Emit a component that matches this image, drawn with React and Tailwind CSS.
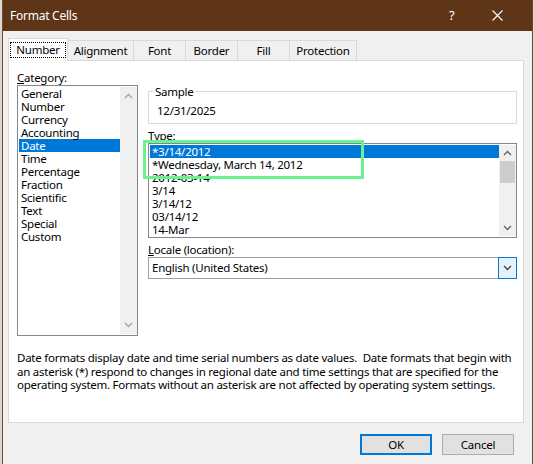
const categories = [
  'General', 'Number', 'Currency', 'Accounting', 'Date', 'Time',
  'Percentage', 'Fraction', 'Scientific', 'Text', 'Special', 'Custom',
];

const types = [
  '*3/14/2012', '*Wednesday, March 14, 2012', '2012-03-14', '3/14', '3/14/12', '03/14/12', '14-Mar',
];

const tabs = [
  { label: 'Alignment', w: 'w-[67px]' },
  { label: 'Font', w: 'w-[53px]' },
  { label: 'Border', w: 'w-[53px]' },
  { label: 'Fill', w: 'w-[53px]' },
  { label: 'Protection', w: 'w-[68px]' },
];

function Chevron({ up, color = '#a3a3a3' }) {
  return (
    <svg width="9" height="6" viewBox="0 0 9 6">
      <path
        d={up ? 'M1 5 L4.5 1.5 L8 5' : 'M1 1 L4.5 4.5 L8 1'}
        fill="none"
        stroke={color}
        strokeWidth="1.3"
      />
    </svg>
  );
}

export default function App() {
  return (
    <div className="flex h-[464px] w-[534px] overflow-hidden bg-[#ddd8d2] font-['Noto_Sans',sans-serif] text-[11.5px] tracking-[-0.25px] text-black">
      <div className="ml-[2px] flex h-[464px] w-[531px] flex-col border-x border-[#6b4c33] bg-[#f0f0f0]">
        {/* title bar */}
        <div className="flex h-[31px] shrink-0 items-center bg-[#5f3518] pl-[7px] text-white">
          <span className="flex-1 text-[12px]">Format Cells</span>
          <span className="w-[12px] text-[13px]">?</span>
          <div className="ml-[31px] mr-[29px] flex items-center">
            <svg width="11" height="11" viewBox="0 0 11 11">
              <path d="M0.5 0.5 L10.5 10.5 M10.5 0.5 L0.5 10.5" stroke="#fff" strokeWidth="1.1" />
            </svg>
          </div>
        </div>

        {/* tabs */}
        <div className="ml-[5px] mt-[7px] flex items-end">
          <div className="relative z-10 -mb-px flex h-[23px] w-[60px] items-center justify-center border border-b-0 border-[#d9d9d9] bg-white">
            <span className="border border-dotted border-black px-[5px] leading-[14px]">Number</span>
          </div>
          {tabs.map((t) => (
            <div
              key={t.label}
              className={`-ml-px flex h-[20px] items-center justify-center border border-b-0 border-[#d9d9d9] bg-[#f0f0f0] pt-px ${t.w}`}
            >
              {t.label}
            </div>
          ))}
        </div>

        {/* panel */}
        <div className="ml-[5px] h-[363px] w-[516px] border border-[#d9d9d9] bg-white pl-[8px] pr-[5px] pt-[9px]">
          <div className="flex gap-[10px]">
            <div className="w-[121px]">
              <div className="h-[15px] leading-[15px]">
                <span className="underline">C</span>ategory:
              </div>
              <div className="flex h-[251px] border border-[#828790] p-px pr-0">
                <div className="flex-1">
                  {categories.map((c) => (
                    <div
                      key={c}
                      className={`h-[13px] pl-[2px] leading-[13px] ${c === 'Date' ? 'bg-[#0078d7] text-white' : ''}`}
                    >
                      {c}
                    </div>
                  ))}
                </div>
                <div className="flex w-[17px] flex-col items-center justify-between bg-[#f0f0f0] py-[6px]">
                  <Chevron up />
                  <Chevron />
                </div>
              </div>
            </div>

            <div className="relative w-[369px] pt-[14px]">
              <fieldset className="border border-[#dcdcdc]">
                <legend className="ml-[5px] px-px leading-[15px]">Sample</legend>
                <div className="pb-[5px] pl-[8px] pt-[5px] leading-[14px]">12/31/2025</div>
              </fieldset>

              <div className="mt-[4px] h-[15px] leading-[15px]">Type:</div>
              <div className="flex h-[95px] border border-[#828790] p-px pr-0">
                <div className="flex-1">
                  {types.map((t, i) => (
                    <div
                      key={t}
                      className={`h-[13px] pl-[2px] leading-[13px] ${i === 0 ? 'bg-[#0078d7] text-white' : ''}`}
                    >
                      {t}
                    </div>
                  ))}
                </div>
                <div className="flex w-[17px] flex-col items-center bg-[#f0f0f0] py-[5px]">
                  <Chevron up color="#606060" />
                  <div className="mt-[5px] h-[22px] w-[15px] bg-[#cdcdcd]" />
                  <div className="mt-auto">
                    <Chevron color="#606060" />
                  </div>
                </div>
              </div>

              <div className="mt-[4px] h-[15px] leading-[15px]">
                <span className="underline">L</span>ocale (location):
              </div>
              <div className="flex h-[22px] border border-[#a0a0a0]">
                <div className="flex-1 pl-[3px] leading-[20px]">English (United States)</div>
                <div className="-my-px -mr-px flex w-[19px] items-center justify-center border border-[#0078d7] bg-[#e5f1fb]">
                  <Chevron color="#404040" />
                </div>
              </div>

              {/* highlight box */}
              <div className="pointer-events-none absolute left-[-5px] top-[70px] h-[39px] w-[221px] border-[3px] border-[#6af28e]" />
            </div>
          </div>

          <p className="mt-[15px] w-[501px] leading-[13.5px]">
            Date formats display date and time serial numbers as date values.&nbsp; Date formats that begin with
            an asterisk (*) respond to changes in regional date and time settings that are specified for the
            operating system. Formats without an asterisk are not affected by operating system settings.
          </p>
        </div>

        {/* buttons */}
        <div className="mr-[18px] mt-[11px] flex justify-end gap-[10px]">
          <button className="h-[21px] w-[72px] border-2 border-[#0078d7] bg-[#e1e1e1]">OK</button>
          <button className="h-[21px] w-[72px] border border-[#adadad] bg-[#e1e1e1]">Cancel</button>
        </div>
      </div>
    </div>
  );
}
